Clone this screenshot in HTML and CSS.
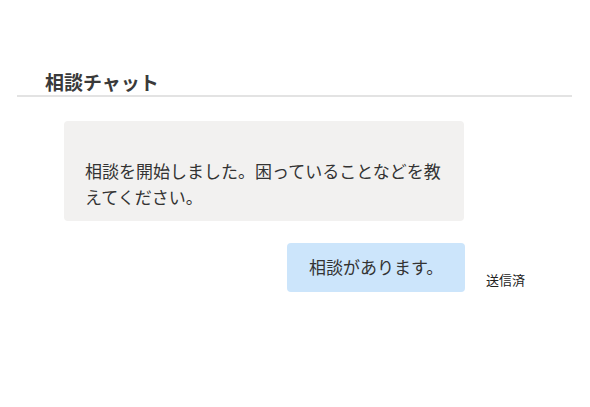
FILE: index.html
```html
<!DOCTYPE html>
<html lang="ja">
<head>
<meta charset="utf-8">
<title>相談チャット</title>
<link rel="stylesheet" href="styles.css">
</head>
<body>
  <header class="header">
    <h1 class="title">相談チャット</h1>
  </header>
  <main class="thread">
    <div class="row">
      <div class="col">
        <div class="bubble bubble-in">相談を開始しました。困っていることなどを教えてください。</div>
      </div>
    </div>
    <div class="row">
      <div class="col col-right">
        <div class="bubble bubble-out">相談があります。</div>
      </div>
      <div class="meta">送信済</div>
    </div>
  </main>
</body>
</html>
```

FILE: styles.css
```css
html, body {
  margin: 0;
  padding: 0;
  background: #ffffff;
}
body {
  font-family: "Noto Sans CJK JP", "Noto Sans", sans-serif;
  color: #333333;
}
.header {
  margin: 69px 18px 0 17px;
  padding: 0 0 1px 28px;
  border-bottom: 2px solid #e3e3e3;
}
.title {
  margin: 0;
  font-size: 19px;
  line-height: 25px;
  font-weight: 700;
  color: #3a3a3a;
}
.thread {
  display: flex;
  flex-direction: column;
  gap: 22px;
  margin: 24px 0 0 64px;
}
.row {
  display: flex;
  align-items: flex-end;
}
.col {
  width: 401px;
  display: flex;
}
.col-right {
  justify-content: flex-end;
}
.bubble {
  font-size: 17px;
  line-height: 26px;
  border-radius: 4px;
  box-sizing: border-box;
}
.bubble-in {
  width: 400px;
  padding: 37px 21px 11px 21px;
  background: #f2f1f0;
}
.bubble-out {
  width: 178px;
  height: 49px;
  padding: 11px 0 12px 22px;
  background: #cce5fb;
}
.meta {
  margin: 0 0 3px 21px;
  font-size: 13px;
  line-height: 18px;
  color: #222222;
}
```
